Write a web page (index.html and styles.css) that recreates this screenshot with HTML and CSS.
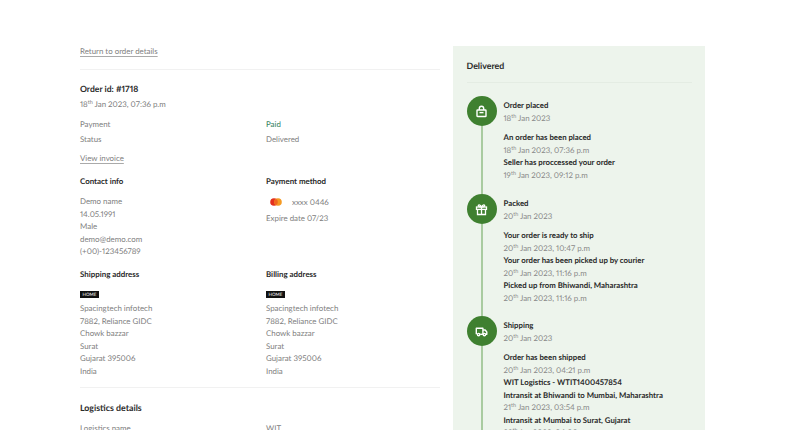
FILE: index.html
```html
<!DOCTYPE html>
<html lang="en">
<head>
<meta charset="utf-8">
<title>Order details</title>
<link rel="stylesheet" href="styles.css">
</head>
<body>
<main class="page">
  <section class="details">
    <header class="back"><a class="link" href="#">Return to order details</a></header>
    <h1 class="order-id">Order id: #1718</h1>
    <p class="order-date">18<sup>th</sup> Jan 2023, 07:36 p.m</p>
    <dl class="rows">
      <dt>Payment</dt><dd class="paid">Paid</dd>
      <dt>Status</dt><dd>Delivered</dd>
    </dl>
    <a class="link invoice" href="#">View invoice</a>
    <div class="pair contact">
      <div>
        <h2 class="heading">Contact info</h2>
        <ul class="lines list-gap">
          <li>Demo name</li><li>14.05.1991</li><li>Male</li><li>demo@demo.com</li><li>(+00)-123456789</li>
        </ul>
      </div>
      <div>
        <h2 class="heading">Payment method</h2>
        <div class="card">
          <svg class="mc" width="12" height="8" viewBox="0 0 12 8"><circle cx="4" cy="4" r="3.8" fill="#e3301f"/><circle cx="8" cy="4" r="3.8" fill="#f59a23"/><path d="M6 .75a3.8 3.8 0 0 1 0 6.5 3.8 3.8 0 0 1 0-6.5z" fill="#f0641f"/></svg>
          <span>xxxx 0446</span>
        </div>
        <p class="expire">Expire date 07/23</p>
      </div>
    </div>
    <div class="pair address">
      <div>
        <h2 class="heading">Shipping address</h2>
        <span class="badge">HOME</span>
        <ul class="lines">
          <li>Spacingtech infotech</li><li>7882, Reliance GIDC</li><li>Chowk bazzar</li><li>Surat</li><li>Gujarat 395006</li><li>India</li>
        </ul>
      </div>
      <div>
        <h2 class="heading">Billing address</h2>
        <span class="badge">HOME</span>
        <ul class="lines">
          <li>Spacingtech infotech</li><li>7882, Reliance GIDC</li><li>Chowk bazzar</li><li>Surat</li><li>Gujarat 395006</li><li>India</li>
        </ul>
      </div>
    </div>
    <h2 class="logistics">Logistics details</h2>
    <dl class="rows logistics-rows">
      <dt>Logistics name</dt><dd>WIT</dd>
    </dl>
  </section>

  <aside class="tracking">
    <h2 class="tracking-title">Delivered</h2>
    <ol class="timeline">
      <li class="step step-placed">
        <div class="rail">
          <span class="dot">
            <svg width="13" height="13" viewBox="0 0 13 13" fill="none" stroke="#fff" stroke-width="1.4"><rect x="2" y="5" width="9" height="6.5" rx=".6"/><path d="M4.3 5V3.4a2.2 2.2 0 0 1 4.4 0V5"/><path d="M4.5 7.6h4"/></svg>
          </span>
          <span class="line"></span>
        </div>
        <div class="body">
          <h3 class="title">Order placed</h3>
          <p class="when">18<sup>th</sup> Jan 2023</p>
          <div class="events">
            <h4 class="title">An order has been placed</h4>
            <p class="when">18<sup>th</sup> Jan 2023, 07:36 p.m</p>
            <h4 class="title">Seller has proccessed your order</h4>
            <p class="when">19<sup>th</sup> Jan 2023, 09:12 p.m</p>
          </div>
        </div>
      </li>
      <li class="step step-packed">
        <div class="rail">
          <span class="dot">
            <svg width="13" height="13" viewBox="0 0 13 13" fill="none" stroke="#fff" stroke-width="1.3"><rect x="1.5" y="4" width="10" height="2.4"/><path d="M2.5 6.4v5.1h8V6.4M6.5 4v7.5"/><path d="M6.5 4C5.2 1.2 2.8 1.4 3.4 3c.2.6 1.4 1 3.1 1zM6.5 4c1.3-2.8 3.7-2.6 3.1-1-.2.6-1.4 1-3.1 1z"/></svg>
          </span>
          <span class="line"></span>
        </div>
        <div class="body">
          <h3 class="title">Packed</h3>
          <p class="when">20<sup>th</sup> Jan 2023</p>
          <div class="events">
            <h4 class="title">Your order is ready to ship</h4>
            <p class="when">20<sup>th</sup> Jan 2023, 10:47 p.m</p>
            <h4 class="title">Your order has been picked up by courier</h4>
            <p class="when">20<sup>th</sup> Jan 2023, 11:16 p.m</p>
            <h4 class="title">Picked up from Bhiwandi, Maharashtra</h4>
            <p class="when">20<sup>th</sup> Jan 2023, 11:16 p.m</p>
          </div>
        </div>
      </li>
      <li class="step">
        <div class="rail">
          <span class="dot">
            <svg width="13" height="13" viewBox="0 0 13 13" fill="none" stroke="#fff" stroke-width="1.4" stroke-linejoin="round"><path d="M1.3 9.3V3.2h6.6v6.1M7.9 5h2.3l1.6 2v2.3h-1"/><path d="M5.2 9.3h2.7"/><circle cx="3.6" cy="9.6" r="1.2"/><circle cx="9.4" cy="9.6" r="1.2"/></svg>
          </span>
          <span class="line"></span>
        </div>
        <div class="body">
          <h3 class="title">Shipping</h3>
          <p class="when">20<sup>th</sup> Jan 2023</p>
          <div class="events">
            <h4 class="title">Order has been shipped</h4>
            <p class="when">20<sup>th</sup> Jan 2023, 04:21 p.m</p>
            <h4 class="title">WIT Logistics - WTIT1400457854</h4>
            <h4 class="title">Intransit at Bhiwandi to Mumbai, Maharashtra</h4>
            <p class="when">21<sup>th</sup> Jan 2023, 03:54 p.m</p>
            <h4 class="title">Intransit at Mumbai to Surat, Gujarat</h4>
            <p class="when">22<sup>th</sup> Jan 2023, 04:00 p.m</p>
          </div>
        </div>
      </li>
    </ol>
  </aside>
</main>
</body>
</html>
```
FILE: styles.css
```css
* { box-sizing: border-box; }
html, body { margin: 0; height: 430px; overflow: hidden; background: #fff; }
body { font-family: "Lato", "Liberation Sans", sans-serif; font-size: 7.9px; line-height: 12.5px; color: #808080; text-rendering: geometricPrecision; font-variant-numeric: proportional-nums; }
h1, h2, h3, h4, p, ul, ol, dl, dd { margin: 0; padding: 0; font-weight: 400; }
ul, ol { list-style: none; }
sup { font-size: 5.5px; line-height: 0; vertical-align: 3px; }

.page { display: grid; grid-template-columns: 360px 252px; column-gap: 13px; padding: 45px 0 0 80px; }

.link { color: #808080; text-decoration: underline; text-underline-offset: 1.5px; text-decoration-color: #aaa; }
.back { height: 25px; line-height: 12px; border-bottom: 1px solid #f1f1f1; }

.order-id { margin-top: 12px; font-size: 8.6px; line-height: 14px; font-weight: 700; color: #2a2a2a; }
.order-date { margin-top: 2px; line-height: 12px; }

.rows { display: grid; grid-template-columns: 186px 1fr; margin-top: 6.5px; line-height: 15px; }
.paid { color: #2f7d5a; }
.invoice { display: block; margin-top: 5.5px; line-height: 12px; }

.pair { display: grid; grid-template-columns: 186px 1fr; margin-top: 11px; }
.address { margin-top: 10.5px; padding-bottom: 10px; border-bottom: 1px solid #f1f1f1; }
.heading { font-size: 7.9px; line-height: 12px; font-weight: 700; color: #2a2a2a; }
.list-gap { margin-top: 8px; }

.card { display: flex; align-items: center; margin-top: 9px; padding-left: 4px; height: 12px; }
.mc { margin-right: 10px; }
.expire { margin-top: 4px; }

.badge { display: block; width: 19px; height: 7px; margin-top: 10.5px; margin-bottom: 4.5px; background: #111; color: #fff; font-size: 4.5px; line-height: 7px; text-align: center; }

.logistics { margin-top: 13px; font-size: 8.8px; line-height: 14px; font-weight: 700; color: #2a2a2a; }
.logistics-rows { margin-top: 5.5px; }

.tracking { height: 400px; margin-top: 1px; padding: 13px 13.5px 0; background: #edf4ec; overflow: hidden; }
.tracking-title { height: 24px; font-size: 8.8px; line-height: 14px; font-weight: 700; color: #2a2a2a; border-bottom: 1px solid #e4ece3; }
.timeline { margin-top: 13px; }
.step { display: grid; grid-template-columns: 30px 1fr; column-gap: 7px; }
.step-placed { height: 98px; }
.step-packed { height: 122px; }
.rail { display: flex; flex-direction: column; align-items: center; }
.dot { flex: none; display: flex; align-items: center; justify-content: center; width: 30px; height: 30px; border-radius: 50%; background: #3f8030; }
.line { flex: 1; width: 2px; background: #a9cba0; }
.body { padding-top: 3px; }
.title { font-size: 7.8px; line-height: 12.5px; font-weight: 700; color: #2a2a2a; }
.when { line-height: 12.5px; color: #8a8a8a; }
.events { margin-top: 7px; }
```
